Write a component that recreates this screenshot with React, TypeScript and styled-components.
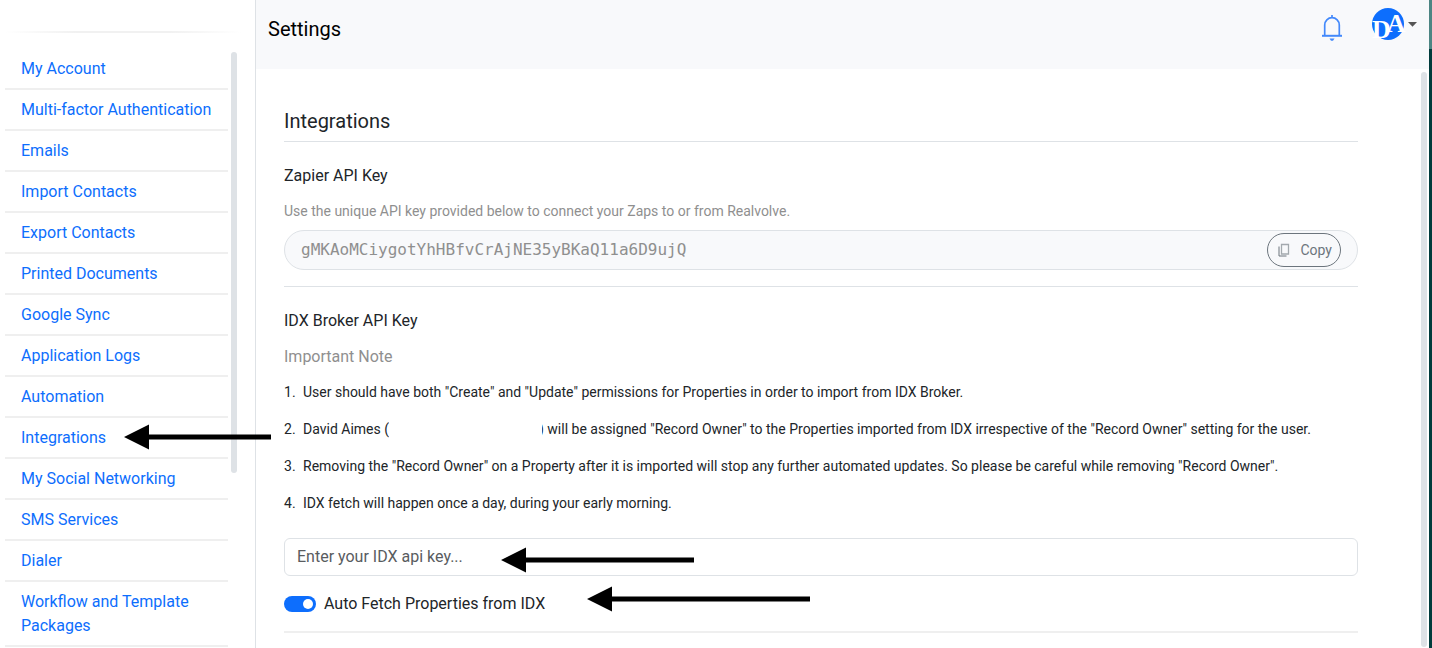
import React from 'react';
import styled, { createGlobalStyle } from 'styled-components';

const GlobalStyle = createGlobalStyle`
  *, *::before, *::after { box-sizing: border-box; }
  body {
    margin: 0;
    background: #fff;
    color: #212529;
    font-family: Roboto, "Liberation Sans", sans-serif;
    font-size: 16px;
    line-height: 24px;
  }
`;

const Shell = styled.div`
  display: flex;
  height: 100vh;
  overflow: hidden;
`;

const Sidebar = styled.aside`
  flex: 0 0 256px;
  display: flex;
  flex-direction: column;
  border-right: 1px solid #dee2e6;
  padding-left: 5px;
`;

const SidebarRule = styled.div`
  flex: none;
  height: 2px;
  margin: 31px 14px 16px 0;
  background: linear-gradient(to right, transparent, #f1f1f1 30%, #f1f1f1 70%, transparent);
`;

const SidebarBody = styled.div`
  display: flex;
  align-items: flex-start;
  gap: 3px;
`;

const Menu = styled.ul`
  flex: 0 0 223px;
  margin: 0;
  padding: 0;
  list-style: none;
`;

const MenuItem = styled.li`
  position: relative;
  padding: 8px 16px 7px;
  border-bottom: 2px solid #efefef;
`;

const MenuLink = styled.a`
  color: #0d6efd;
  text-decoration: none;
`;

const ScrollThumb = styled.div<{ $height: string }>`
  flex: none;
  width: 6px;
  height: ${(p) => p.$height};
  margin-top: 3px;
  border-radius: 3px;
  background: #dee2e6;
`;

const Page = styled.div`
  flex: 1;
  min-width: 0;
  display: flex;
  flex-direction: column;
`;

const Header = styled.header`
  flex: 0 0 69px;
  display: flex;
  align-items: flex-start;
  justify-content: space-between;
  padding: 8px 12px 0;
  background: #f8f9fb;
`;

const PageTitle = styled.h1`
  margin: 0;
  padding-top: 9px;
  font-size: 20px;
  font-weight: 400;
  line-height: 24px;
  color: #000;
`;

const HeaderActions = styled.div`
  display: flex;
  align-items: flex-start;
  gap: 29px;
`;

const IconButton = styled.button`
  display: flex;
  align-items: center;
  gap: 4px;
  padding: 0;
  border: 0;
  background: none;
  cursor: pointer;
`;

const BellButton = styled(IconButton)`
  padding-top: 6px;
`;

const Body = styled.div`
  flex: 1;
  min-height: 0;
  display: flex;
  gap: 63px;
  padding-right: 2px;
`;

const Content = styled.main`
  flex: 1;
  min-width: 0;
  padding: 40px 0 0 28px;
`;

const SectionTitle = styled.h2`
  margin: 0;
  padding-bottom: 8px;
  border-bottom: 1px solid #dee2e6;
  font-size: 20px;
  font-weight: 400;
  line-height: 24px;
`;

const Section = styled.section<{ $rule: number; $color: string }>`
  padding: 22px 0 16px;
  border-bottom: ${(p) => p.$rule}px solid ${(p) => p.$color};
`;

const FieldTitle = styled.label`
  display: block;
`;

const Hint = styled.p`
  margin: 13px 0 9px;
  font-size: 14px;
  line-height: 20px;
  color: #8f8f8f;
`;

const KeyBox = styled.div`
  display: flex;
  align-items: center;
  height: 40px;
  padding: 0 16px;
  border: 1px solid #dee2e6;
  border-radius: 20px;
  background: #f8f9fb;
`;

const KeyInput = styled.input`
  flex: 1;
  min-width: 0;
  padding: 0 0 1px;
  border: 0;
  outline: 0;
  background: none;
  color: #8f8f8f;
  font-family: "DejaVu Sans Mono", monospace;
  font-size: 16px;
`;

const CopyButton = styled.button`
  display: flex;
  align-items: center;
  gap: 8px;
  height: 34px;
  padding: 0 8px 0 10px;
  border: 1px solid #6c757d;
  border-radius: 17px;
  background: none;
  color: #6c757d;
  font-family: inherit;
  font-size: 14px;
  cursor: pointer;
`;

const NoteTitle = styled.h3`
  margin: 12px 0 13px;
  font-size: 16px;
  font-weight: 400;
  line-height: 24px;
  color: #8f8f8f;
`;

const Notes = styled.ol`
  display: flex;
  flex-direction: column;
  gap: 16px;
  margin: 0 0 24px;
  padding: 0;
  list-style: none;
  counter-reset: note;
  font-size: 14px;
  line-height: 21px;
`;

const Note = styled.li`
  display: grid;
  grid-template-columns: 19px 1fr;
  counter-increment: note;
  &::before { content: counter(note) "."; }
`;

const Redacted = styled.span`
  position: relative;
  display: inline-block;
  width: 153px;
  height: 16px;
  margin-right: -3px;
  vertical-align: middle;
  background: #fff;
`;

const FieldWrap = styled.div`
  position: relative;
`;

const TextInput = styled.input`
  display: block;
  width: 100%;
  height: 38px;
  padding: 0 12px 2px;
  border: 1px solid #dee2e6;
  border-radius: 6px;
  font-family: inherit;
  font-size: 16px;
  color: #212529;
  &::placeholder { color: #595c5f; opacity: 1; }
`;

const SwitchRow = styled.div`
  position: relative;
  display: flex;
  align-items: center;
  gap: 8px;
  height: 23px;
  margin-top: 16px;
`;

const Switch = styled.input`
  appearance: none;
  display: flex;
  align-items: center;
  width: 32px;
  height: 16px;
  margin: 0;
  padding: 0 3px;
  border-radius: 8px;
  background: #adb5bd;
  &::before {
    content: "";
    width: 10px;
    height: 10px;
    border-radius: 50%;
    background: #fff;
  }
  &:checked {
    justify-content: flex-end;
    background: #0d6efd;
  }
`;

const WindowEdge = styled.div`
  flex: 0 0 3px;
  background: linear-gradient(#4c8583 49px, #003c3c 49px);
`;

const ArrowSvg = styled.svg<{ $left: number; $top: number }>`
  position: absolute;
  left: ${(p) => p.$left}px;
  top: ${(p) => p.$top}px;
  z-index: 2;
  pointer-events: none;
`;

const AvatarSvg = styled.svg`
  overflow: visible;
`;

type ArrowProps = { left: number; top: number; length: number };

const Arrow = ({ left, top, length }: ArrowProps) => (
  <ArrowSvg $left={left} $top={top} width={length} height="26" aria-hidden="true">
    <path d={`M0 13 L25 0.5 V25.5 Z M24 10.5 H${length} V15.5 H24 Z`} fill="#000" />
  </ArrowSvg>
);

const BellIcon = () => (
  <svg width="22" height="28" viewBox="0 0 22 28" fill="none" stroke="#4389fb" strokeWidth="1.7" aria-hidden="true">
    <path d="M11 1V3.500M3.700 21V11a7.300 7.300 0 0 1 14.600 0V21" />
    <path d="M1 21.800H21" strokeWidth="2" />
    <path d="M8.500 24.500H13.500L12 26.800H10Z" fill="#4389fb" stroke="none" />
  </svg>
);

const Avatar = () => (
  <AvatarSvg width="32" height="32" viewBox="0 0 32 32" aria-hidden="true">
    <circle cx="16" cy="16" r="16" fill="#0d6efd" />
    <text x="0" y="30" fill="#fff" fontFamily="Liberation Serif, serif" fontWeight="700" fontSize="26">
      D<tspan dx="-4" dy="-6">A</tspan>
    </text>
  </AvatarSvg>
);

const MENU = [
  'My Account',
  'Multi-factor Authentication',
  'Emails',
  'Import Contacts',
  'Export Contacts',
  'Printed Documents',
  'Google Sync',
  'Application Logs',
  'Automation',
  'Integrations',
  'My Social Networking',
  'SMS Services',
  'Dialer',
  'Workflow and Template Packages',
];

export default function App() {
  return (
    <>
      <GlobalStyle />
      <Shell>
        <Sidebar>
          <SidebarRule />
          <SidebarBody>
            <Menu>
              {MENU.map((label) => (
                <MenuItem key={label}>
                  <MenuLink href="#">{label}</MenuLink>
                  {label === 'Integrations' && <Arrow left={119} top={6} length={147} />}
                </MenuItem>
              ))}
            </Menu>
            <ScrollThumb $height="421px" />
          </SidebarBody>
        </Sidebar>
        <Page>
          <Header>
            <PageTitle>Settings</PageTitle>
            <HeaderActions>
              <BellButton aria-label="Notifications">
                <BellIcon />
              </BellButton>
              <IconButton aria-label="Account menu">
                <Avatar />
                <svg width="9" height="5" viewBox="0 0 9 5" aria-hidden="true">
                  <path d="M0 0H9L4.500 4.800Z" fill="#555" />
                </svg>
              </IconButton>
            </HeaderActions>
          </Header>
          <Body>
            <Content>
              <SectionTitle>Integrations</SectionTitle>
              <Section $rule={1} $color="#dee2e6">
                <FieldTitle htmlFor="zapier-key">Zapier API Key</FieldTitle>
                <Hint>Use the unique API key provided below to connect your Zaps to or from Realvolve.</Hint>
                <KeyBox>
                  <KeyInput id="zapier-key" readOnly value="gMKAoMCiygotYhHBfvCrAjNE35yBKaQ11a6D9ujQ" />
                  <CopyButton>
                    <svg width="14" height="14" viewBox="0 0 14 14" fill="none" aria-hidden="true">
                      <path d="M3.500 1.500H10.500V11H3.500Z" stroke="#a3a9ae" strokeWidth="1.300" />
                      <path d="M1 3.500V13H8.500" stroke="#6c757d" />
                    </svg>
                    Copy
                  </CopyButton>
                </KeyBox>
              </Section>
              <Section $rule={2} $color="#efefef">
                <FieldTitle htmlFor="idx-key">IDX Broker API Key</FieldTitle>
                <NoteTitle>Important Note</NoteTitle>
                <Notes>
                  <Note>
                    <span>
                      User should have both "Create" and "Update" permissions for Properties in order to import from
                      IDX Broker.
                    </span>
                  </Note>
                  <Note>
                    <span>
                      David Aimes (<Redacted />) will be assigned "Record Owner" to the Properties imported from IDX
                      irrespective of the "Record Owner" setting for the user.
                    </span>
                  </Note>
                  <Note>
                    <span>
                      Removing the "Record Owner" on a Property after it is imported will stop any further automated
                      updates. So please be careful while removing "Record Owner".
                    </span>
                  </Note>
                  <Note>
                    <span>IDX fetch will happen once a day, during your early morning.</span>
                  </Note>
                </Notes>
                <FieldWrap>
                  <TextInput id="idx-key" type="text" placeholder="Enter your IDX api key..." />
                  <Arrow left={217} top={9} length={193} />
                </FieldWrap>
                <SwitchRow>
                  <Switch type="checkbox" role="switch" id="auto-fetch" defaultChecked />
                  <label htmlFor="auto-fetch">Auto Fetch Properties from IDX</label>
                  <Arrow left={303} top={-6} length={223} />
                </SwitchRow>
              </Section>
            </Content>
            <ScrollThumb $height="calc(100% - 4px)" />
          </Body>
        </Page>
        <WindowEdge />
      </Shell>
    </>
  );
}
